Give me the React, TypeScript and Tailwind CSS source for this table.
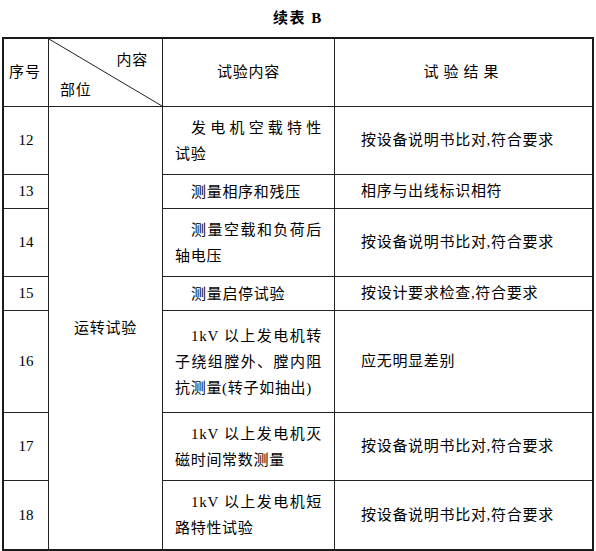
import React from "react";

const FONT = { fontFamily: '"Liberation Serif", "Noto Sans CJK SC", serif' };

function Num({ n, last }: { n: string; last?: boolean }) {
  return (
    <div className={`flex items-center justify-center border-r border-[#222] text-[15px] ${last ? "" : "border-b"}`}>
      {n}
    </div>
  );
}

function Content({ lines, last }: { lines: string[]; last?: boolean }) {
  return (
    <div className={`flex flex-col justify-center border-r border-[#222] px-[12px] text-[15px] leading-[26px] tracking-[0.7px] ${last ? "" : "border-b"}`}>
      {lines.map((l, i) => {
        const isLast = i === lines.length - 1;
        const multi = lines.length > 1;
        return (
          <div
            key={i}
            className={`whitespace-nowrap ${i === 0 ? "pl-[16px]" : ""} ${multi && !isLast ? "text-justify [text-align-last:justify]" : ""}`}
          >
            {l}
          </div>
        );
      })}
    </div>
  );
}

function Result({ text, last }: { text: string; last?: boolean }) {
  return (
    <div className={`flex items-center pl-[26px] text-[15px] tracking-[0.7px] border-[#222] ${last ? "" : "border-b"}`}>
      {text}
    </div>
  );
}

export default function App() {
  const res = "按设备说明书比对,符合要求";
  return (
    <div lang="zh-CN" className="w-[596px] h-[551px] bg-white text-black" style={FONT}>
      <div className="h-[37px] flex items-center justify-center text-[15px] font-bold tracking-[1.5px]">
        续表 B
      </div>
      <div className="pl-[2px]">
        <div className="w-[592px] border-2 border-[#1a1a1a] grid grid-cols-[45px_114px_172px_257px] grid-rows-[68px_68px_34px_68px_34px_102px_68px_68px]">
          {/* header */}
          <div className="flex items-center justify-center pr-[2px] border-r border-b border-[#222] text-[15px] tracking-[1px]">序号</div>
          <div className="relative border-r border-b border-[#222] text-[15px] tracking-[0.7px]">
            <svg className="absolute inset-0" width="113" height="67" viewBox="0 0 113 67">
              <line x1="0" y1="0" x2="113" y2="67" stroke="#222" strokeWidth="1" />
            </svg>
            <div className="absolute right-[14px] top-[10px]">内容</div>
            <div className="absolute left-[11px] bottom-[5px]">部位</div>
          </div>
          <div className="flex items-center justify-center border-r border-b border-[#222] text-[15px] tracking-[0.7px]">试验内容</div>
          <div className="flex items-center justify-center border-b border-[#222] text-[15px] tracking-[5px]">试验结果</div>

          {/* row 12 */}
          <Num n="12" />
          <div className="row-span-7 flex items-center justify-center border-r border-[#222] text-[15px] tracking-[0.7px]">
            运转试验
          </div>
          <Content lines={["发电机空载特性", "试验"]} />
          <Result text={res} />

          <Num n="13" />
          <Content lines={["测量相序和残压"]} />
          <Result text="相序与出线标识相符" />

          <Num n="14" />
          <Content lines={["测量空载和负荷后", "轴电压"]} />
          <Result text={res} />

          <Num n="15" />
          <Content lines={["测量启停试验"]} />
          <Result text="按设计要求检查,符合要求" />

          <Num n="16" />
          <Content lines={["1kV 以上发电机转", "子绕组膛外、膛内阻", "抗测量(转子如抽出)"]} />
          <Result text="应无明显差别" />

          <Num n="17" />
          <Content lines={["1kV 以上发电机灭", "磁时间常数测量"]} />
          <Result text={res} />

          <Num n="18" last />
          <Content lines={["1kV 以上发电机短", "路特性试验"]} last />
          <Result text={res} last />
        </div>
      </div>
    </div>
  );
}
